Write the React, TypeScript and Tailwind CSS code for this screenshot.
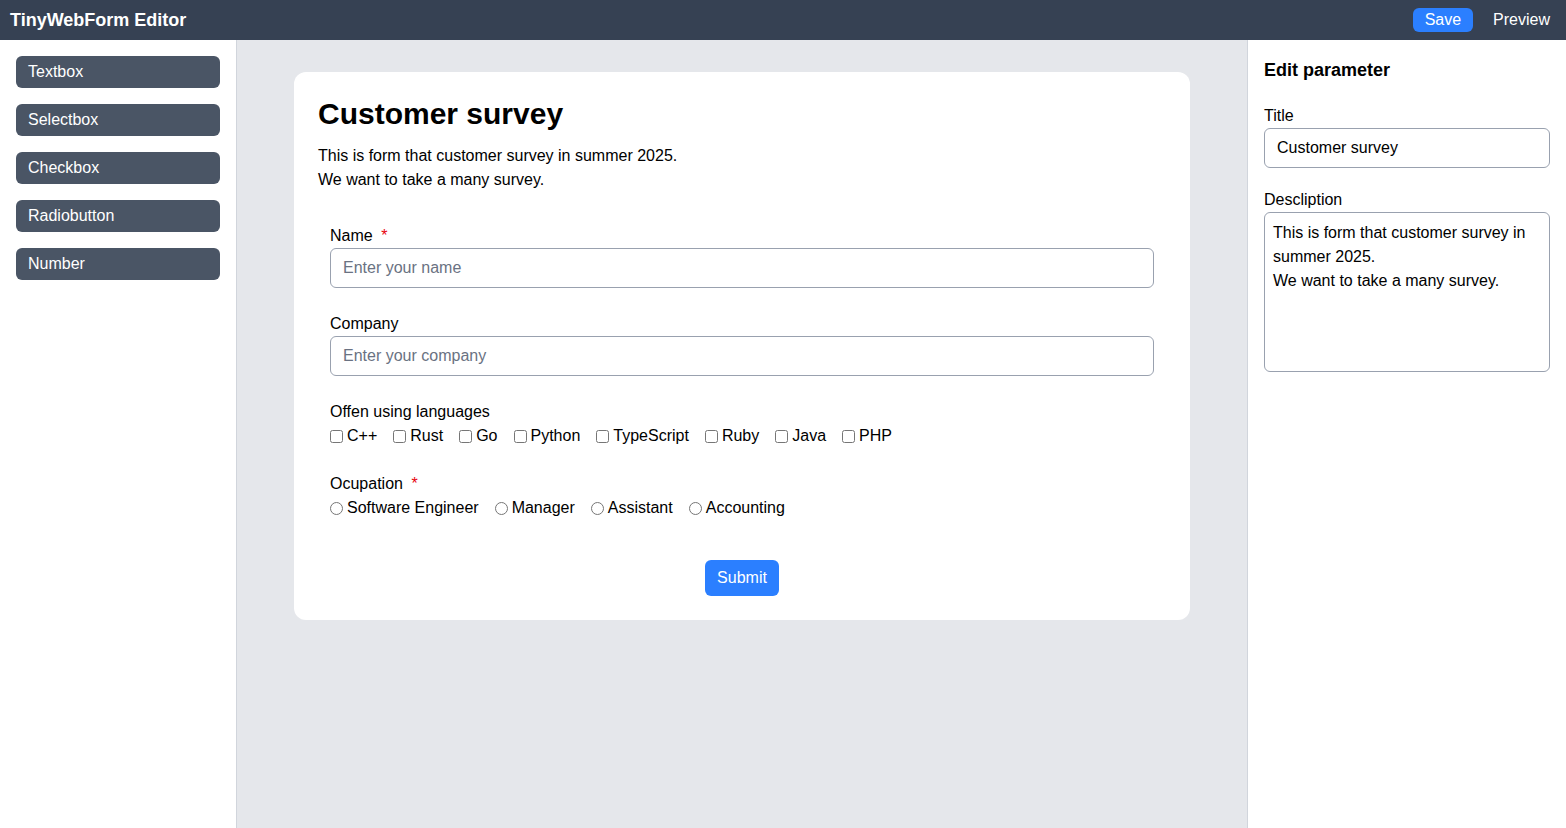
import React from "react";

const languages = ["C++", "Rust", "Go", "Python", "TypeScript", "Ruby", "Java", "PHP"];
const occupations = ["Software Engineer", "Manager", "Assistant", "Accounting"];
const tools = ["Textbox", "Selectbox", "Checkbox", "Radiobutton", "Number"];

export default function App() {
  return (
    <div className="flex h-screen flex-col font-['Liberation_Sans',Arial,sans-serif] text-base text-black">
      <header className="flex h-10 shrink-0 items-center justify-between bg-gray-700 pl-2.5 pr-4">
        <div className="text-lg font-bold text-white">TinyWebForm Editor</div>
        <div className="flex items-center gap-5">
          <button className="rounded-md bg-blue-500 px-3 leading-6 text-white">Save</button>
          <button className="leading-6 text-white">Preview</button>
        </div>
      </header>
      <div className="flex min-h-0 flex-1">
        <aside className="flex w-[237px] shrink-0 flex-col gap-4 border-r border-gray-300 bg-white p-4">
          {tools.map((t) => (
            <button key={t} className="w-full rounded-md bg-gray-600 px-3 py-1 text-left leading-6 text-white">
              {t}
            </button>
          ))}
        </aside>
        <main className="flex-1 overflow-auto bg-gray-200 pt-8">
          <div className="mx-auto w-[896px] rounded-xl bg-white p-6">
            <h1 className="text-3xl font-bold leading-9">Customer survey</h1>
            <p className="mt-3 leading-6">
              This is form that customer survey in summer 2025.
              <br />
              We want to take a many survey.
            </p>
            <div className="mt-5 flex flex-col gap-6 p-3">
              <div>
                <label className="block leading-6">
                  Name <span className="ml-1 text-red-600">*</span>
                </label>
                <input
                  className="h-10 w-full rounded-md border border-gray-400 px-3 placeholder:text-gray-500"
                  placeholder="Enter your name"
                />
              </div>
              <div>
                <label className="block leading-6">Company</label>
                <input
                  className="h-10 w-full rounded-md border border-gray-400 px-3 placeholder:text-gray-500"
                  placeholder="Enter your company"
                />
              </div>
              <div>
                <div className="leading-6">Offen using languages</div>
                <div className="flex flex-wrap items-center gap-4">
                  {languages.map((l) => (
                    <label key={l} className="flex items-center gap-1 leading-6">
                      <input type="checkbox" className="h-[13px] w-[13px]" />
                      {l}
                    </label>
                  ))}
                </div>
              </div>
              <div>
                <div className="leading-6">
                  Ocupation <span className="ml-1 text-red-600">*</span>
                </div>
                <div className="flex flex-wrap items-center gap-4">
                  {occupations.map((o) => (
                    <label key={o} className="flex items-center gap-1 leading-6">
                      <input type="radio" name="occ" className="h-[13px] w-[13px]" />
                      {o}
                    </label>
                  ))}
                </div>
              </div>
            </div>
            <div className="mt-7 flex justify-center">
              <button className="rounded-md bg-blue-500 px-3 py-1.5 leading-6 text-white">Submit</button>
            </div>
          </div>
        </main>
        <aside className="w-[319px] shrink-0 border-l border-gray-300 bg-white p-4">
          <h2 className="text-lg font-bold leading-7">Edit parameter</h2>
          <label className="mt-5 block leading-6">Title</label>
          <input
            className="h-10 w-full rounded-md border border-gray-400 px-3"
            defaultValue="Customer survey"
          />
          <label className="mt-5 block leading-6">Descliption</label>
          <textarea
            className="block h-40 w-full resize-none rounded-md border border-gray-400 p-2 leading-6"
            defaultValue={"This is form that customer survey in summer 2025.\nWe want to take a many survey."}
          />
        </aside>
      </div>
    </div>
  );
}
